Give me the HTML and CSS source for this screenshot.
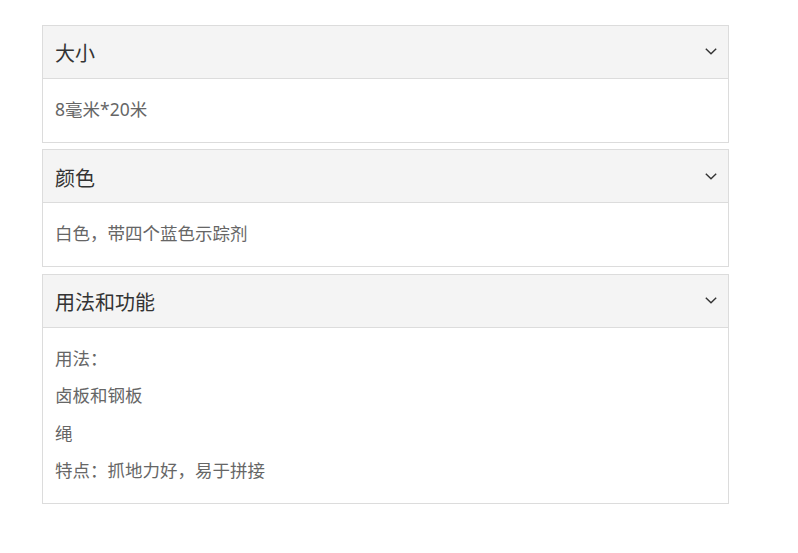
FILE: index.html
```html
<!DOCTYPE html>
<html lang="zh-CN">

<head>
    <meta charset="UTF-8">
    <title>产品规格</title>
    <link rel="stylesheet" href="styles.css">
</head>

<body>
    <div class="specs">

        <!-- 大小 -->
        <div class="panel">
            <div class="panel-head">
                <span>大小</span>
                <svg class="chevron" viewBox="0 0 12 7" width="12" height="7"><path d="M0.8 0.8 L6 5.8 L11.2 0.8" fill="none" stroke="#333" stroke-width="1.4"/></svg>
            </div>
            <div class="panel-body">
                <p>8毫米*20米</p>
            </div>
        </div>

        <!-- 颜色 -->
        <div class="panel">
            <div class="panel-head">
                <span>颜色</span>
                <svg class="chevron" viewBox="0 0 12 7" width="12" height="7"><path d="M0.8 0.8 L6 5.8 L11.2 0.8" fill="none" stroke="#333" stroke-width="1.4"/></svg>
            </div>
            <div class="panel-body">
                <p>白色，带四个蓝色示踪剂</p>
            </div>
        </div>

        <!-- 用法和功能 -->
        <div class="panel">
            <div class="panel-head">
                <span>用法和功能</span>
                <svg class="chevron" viewBox="0 0 12 7" width="12" height="7"><path d="M0.8 0.8 L6 5.8 L11.2 0.8" fill="none" stroke="#333" stroke-width="1.4"/></svg>
            </div>
            <div class="panel-body">
                <p>用法：</p>
                <p>卤板和钢板</p>
                <p>绳</p>
                <p>特点：抓地力好，易于拼接</p>
            </div>
        </div>

    </div>
</body>

</html>
```

FILE: styles.css
```css
body {
    font-family: "Noto Sans", "Noto Sans CJK SC", sans-serif;
    margin: 0;
    padding: 0;
    background-color: #fff;
}

.specs {
    width: 687px;
    margin: 24.5px 0 0 42px;
}

.panel {
    border: 1px solid #dcdcdc;
    margin-bottom: 6.5px;
    box-sizing: border-box;
}

.panel-head {
    height: 52px;
    padding: 0 11px 0 12px;
    display: flex;
    align-items: center;
    justify-content: space-between;
    background-color: #f4f4f4;
    border-bottom: 1px solid #dcdcdc;
    color: #333;
    font-size: 20px;
}

.panel-head span {
    padding-top: 2px;
}

.chevron {
    display: block;
}

.panel-body {
    padding: 12px 12px 13.5px;
    color: #666;
    font-size: 17.5px;
}

.panel-body p {
    margin: 0;
    line-height: 37.5px;
}
```
